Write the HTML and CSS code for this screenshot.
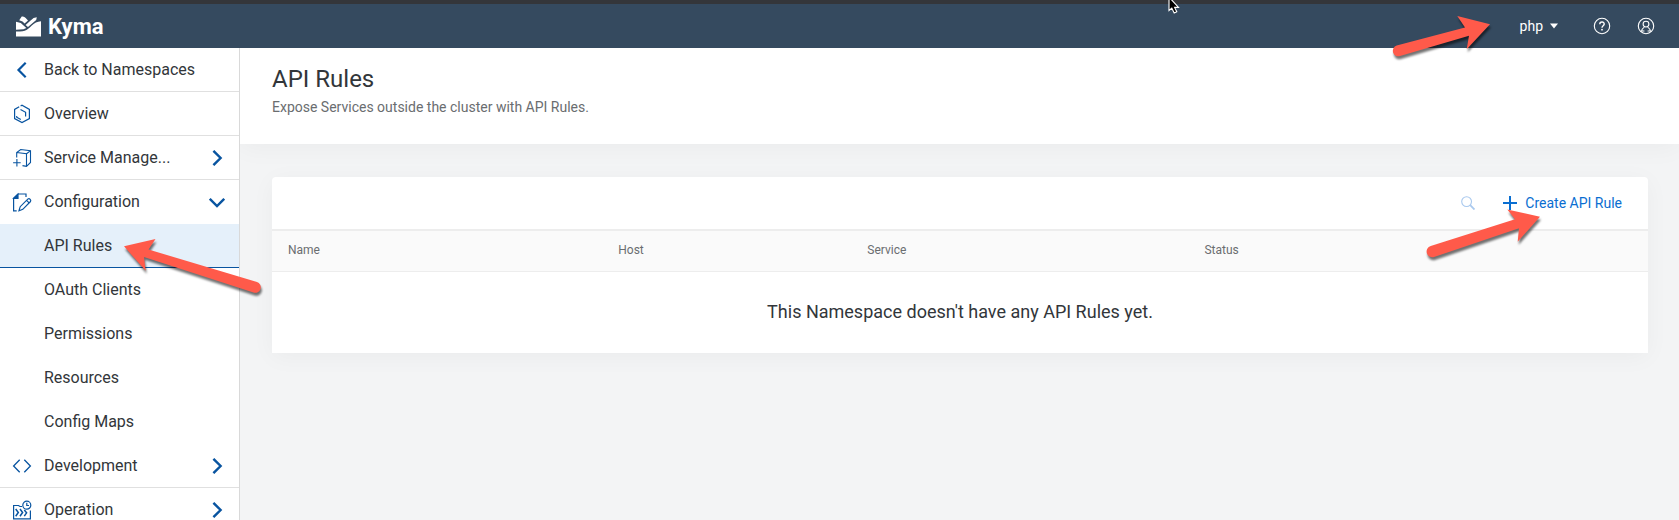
FILE: index.html
```
<!DOCTYPE html>
<html lang="en">
<head>
<meta charset="utf-8">
<title>Kyma</title>
<link rel="stylesheet" href="styles.css">
</head>
<body>
<div class="app">
  <header class="shellbar">
    <a class="brand" href="#">
      <svg class="brand-mark" viewBox="0 0 25 21" aria-hidden="true">
        <path fill="#fff" d="M0 5.8L4.8 7L10.3 11.9L7.5 13.2L0 13.8Z M3.2 4.2L5.7 .6Q8 -.2 9.7 2.1L12 4.4L8.6 7.6L6.5 5.6Z M9.6 8.9L14.6 4.4Q17.5 1.3 20.8 1.3L20.2 3.9L12 11Z M0 15.6C10.5 15.7 12 13 15.5 9.7Q19.5 5.5 25 5.2V20.4H0Z"/>
      </svg>
      <span>Kyma</span>
    </a>
    <div class="shell-actions">
      <button class="namespace" type="button">php
        <svg class="caret" viewBox="0 0 8 6" aria-hidden="true"><path fill="#fff" d="M0 .5H8L4 5.5Z"/></svg>
      </button>
      <button class="icon-button" type="button" aria-label="Help">
        <svg viewBox="0 0 18 18" fill="none" stroke="#fff" aria-hidden="true">
          <circle cx="9" cy="9" r="7.7" stroke-width="1.1"/>
          <path d="M6.8 7.2C6.8 4.3 11.3 4.4 11.2 7.1C11.1 8.7 9 8.8 9 10.7" stroke-width="1.4"/>
          <circle cx="9" cy="12.7" r=".9" fill="#fff" stroke="none"/>
        </svg>
      </button>
      <button class="icon-button" type="button" aria-label="Profile">
        <svg viewBox="0 0 18 18" fill="none" stroke="#fff" stroke-width="1.1" aria-hidden="true">
          <circle cx="9" cy="9" r="7.7"/>
          <circle cx="9" cy="7.1" r="2.9"/>
          <path d="M4.4 14.6C4.6 12.2 5.8 11.1 7.3 10.1M13.6 14.6C13.4 12.2 12.2 11.1 10.7 10.1M5 14H7.4M10.6 14H13"/>
        </svg>
      </button>
    </div>
  </header>

  <nav class="sidebar">
    <a class="nav-item" href="#">
      <svg class="nav-icon" viewBox="0 0 20 20" fill="none" stroke="#0854a0" stroke-width="2.2" aria-hidden="true"><path d="M13.7 2.8L6.5 10L13.7 17.2"/></svg>
      <span class="nav-label">Back to Namespaces</span>
    </a>
    <a class="nav-item" href="#">
      <svg class="nav-icon" viewBox="0 0 20 20" fill="none" stroke="#0854a0" stroke-width="1.2" aria-hidden="true"><path d="M7.2 2.8L2.6 5.4V14.6L10 18.6L17.4 14.6V5.4L10 1.3L8.6 2.1M8.5 5.5L13.6 8.3V12.6M4.7 12V13.2L8.8 15.6"/></svg>
      <span class="nav-label">Overview</span>
    </a>
    <a class="nav-item" href="#">
      <svg class="nav-icon" viewBox="0 0 20 20" fill="none" stroke="#0854a0" stroke-width="1.1" aria-hidden="true"><path d="M4.700 9.500V4.500L8.700 1.500L18.500 2.800V14.500L14.500 18.300L10.500 17.600M4.700 4.500L14.500 5.800V18.300M14.500 5.800L18.300 2.900M4.900 11V18.600M1.100 14.800H8.700"/></svg>
      <span class="nav-label">Service Manage...</span>
      <svg class="chevron" viewBox="0 0 16 16" fill="none" stroke="#0854a0" stroke-width="2.4" aria-hidden="true"><path d="M4.4 .8L11.6 8L4.4 15.2"/></svg>
    </a>
    <a class="nav-item nav-item-open" href="#">
      <svg class="nav-icon" viewBox="0 0 20 20" fill="none" stroke="#0854a0" stroke-width="1.2" aria-hidden="true"><path d="M4.7 18.8H1.6V6.2L6 2H14V5M7 18.7L8.2 14.7L16 6.9Q17.1 6.2 18.2 7.3Q19.2 8.5 18.5 9.5L10.8 17.3ZM14.6 8.4L17.1 10.9"/><path fill="#0854a0" d="M1.600 6.500L6 2.200V6.500Z"/></svg>
      <span class="nav-label">Configuration</span>
      <svg class="chevron" viewBox="0 0 16 16" fill="none" stroke="#0854a0" stroke-width="2.4" aria-hidden="true"><path d="M.8 4.8L8 12L15.2 4.8"/></svg>
    </a>
    <a class="nav-item nav-child nav-selected" href="#" aria-current="page"><span class="nav-label">API Rules</span></a>
    <a class="nav-item nav-child" href="#"><span class="nav-label">OAuth Clients</span></a>
    <a class="nav-item nav-child" href="#"><span class="nav-label">Permissions</span></a>
    <a class="nav-item nav-child" href="#"><span class="nav-label">Resources</span></a>
    <a class="nav-item nav-child" href="#"><span class="nav-label">Config Maps</span></a>
    <a class="nav-item" href="#">
      <svg class="nav-icon" viewBox="0 0 20 20" fill="none" stroke="#0854a0" stroke-width="1.3" aria-hidden="true"><path d="M7.7 3.7L1.6 10L7.7 16.3M12.3 3.7L18.4 10L12.3 16.3"/></svg>
      <span class="nav-label">Development</span>
      <svg class="chevron" viewBox="0 0 16 16" fill="none" stroke="#0854a0" stroke-width="2.4" aria-hidden="true"><path d="M4.4 .8L11.6 8L4.4 15.2"/></svg>
    </a>
    <a class="nav-item" href="#">
      <svg class="nav-icon" viewBox="0 0 20 20" fill="none" stroke="#0854a0" stroke-width="1.2" aria-hidden="true"><path d="M10 6.5H8L6.5 5.5H1.6V18.8H18.4V10.5"/><circle cx="14.8" cy="5.2" r="4"/><path d="M14.8 2.8V5.5H17"/><path stroke-width="1.5" d="M3.7 9L6.3 12.5L3.7 16.2M8 9L10.6 12.5L8 16.2M12.3 10L14.6 12.8L12.3 16.2"/></svg>
      <span class="nav-label">Operation</span>
      <svg class="chevron" viewBox="0 0 16 16" fill="none" stroke="#0854a0" stroke-width="2.4" aria-hidden="true"><path d="M4.4 .8L11.6 8L4.4 15.2"/></svg>
    </a>
  </nav>

  <main class="content">
    <section class="page-head">
      <h1>API Rules</h1>
      <p>Expose Services outside the cluster with API Rules.</p>
    </section>
    <section class="panel">
      <div class="toolbar">
        <button class="search" type="button" aria-label="Search">
          <svg viewBox="0 0 14 14" fill="none" stroke="#a9c9ee" aria-hidden="true"><circle cx="5.6" cy="5.6" r="4.9" stroke-width="1.1"/><path stroke-width="1.8" d="M9.2 9.2L13.5 13.5"/></svg>
        </button>
        <button class="create" type="button">
          <svg viewBox="0 0 14 14" stroke="#0a6ed1" stroke-width="2" aria-hidden="true"><path d="M7 0V14M0 7H14"/></svg>
          Create API Rule
        </button>
      </div>
      <table class="rules">
        <colgroup><col class="col-name"><col class="col-host"><col class="col-service"><col class="col-status"></colgroup>
        <thead><tr><th>Name</th><th>Host</th><th>Service</th><th>Status</th></tr></thead>
        <tbody><tr><td colspan="4">This Namespace doesn't have any API Rules yet.</td></tr></tbody>
      </table>
    </section>
  </main>
</div>

<svg class="pointer" viewBox="0 0 14 20" aria-hidden="true"><path fill="#000" stroke="#fff" stroke-width="1.1" d="M1 -3V10.5L3.8 8.2L6.2 13L8.8 11.8L6.6 7.4H10.5Z"/></svg>
<svg class="arrow arrow-nav" viewBox="0 0 150 70" aria-hidden="true"><path d="M5 17.3L36.5 10L29.5 20.5L138 53A5.4 5.4 0 0 1 134.500 63.500L25 28L26.700 41.800Z"/></svg>
<svg class="arrow arrow-namespace" viewBox="0 0 120 60" aria-hidden="true"><path d="M110 24.300L77.300 16L85 27.500L16.700 45.500A5.400 5.400 0 0 0 20 56L89 35.700L86.700 49.300Z"/></svg>
<svg class="arrow arrow-create" viewBox="0 0 130 70" aria-hidden="true"><path d="M120 16.700L87.300 9.500L95 19.300L10.700 46A5.400 5.400 0 0 0 14 57L99 28.300L97.700 41.700Z"/></svg>
</body>
</html>
```
FILE: styles.css
```
* { box-sizing: border-box; }

body {
  margin: 0;
  position: relative;
  font-family: Roboto, "Liberation Sans", sans-serif;
  color: #32363a;
  background: #f3f4f5;
  overflow: hidden;
}

button {
  font: inherit;
  color: inherit;
  background: none;
  border: 0;
  padding: 0;
}

a { color: inherit; text-decoration: none; }
svg { display: block; flex: none; }

.app {
  display: grid;
  grid-template: auto minmax(0, 1fr) / 240px minmax(0, 1fr);
  height: 100vh;
}

.shellbar {
  grid-column: 1 / -1;
  display: flex;
  align-items: center;
  justify-content: space-between;
  height: 48px;
  padding: 0 24px 0 16px;
  border-top: 4px solid #34363a;
  background: #354a5f;
  color: #fff;
}

.brand {
  display: flex;
  align-items: center;
  gap: 7px;
  font-size: 22px;
  font-weight: 700;
}
.brand-mark { width: 25px; height: 21px; }

.shell-actions { display: flex; align-items: center; }
.namespace {
  display: flex;
  align-items: center;
  gap: 7px;
  font-size: 14px;
  margin-right: 35px;
}
.caret { width: 8px; height: 6px; }
.icon-button svg { width: 18px; height: 18px; }
.icon-button + .icon-button { margin-left: 26px; }

.sidebar {
  background: #fff;
  border-right: 1px solid #d9d9d9;
  overflow: hidden;
}
.nav-item {
  display: flex;
  align-items: center;
  height: 44px;
  padding: 0 14px 0 12px;
  border-bottom: 1px solid #e0e0e0;
  font-size: 16px;
}
.nav-icon { width: 20px; height: 20px; margin-right: 12px; }
.nav-label { flex: 1; white-space: nowrap; }
.chevron { width: 16px; height: 16px; }
.nav-item-open { border-bottom-color: transparent; }
.nav-child { padding-left: 44px; border-bottom-color: transparent; }
.nav-selected { background: #e5f0fa; border-bottom: 1px solid #0854a0; }

.content { overflow: hidden; }
.page-head {
  height: 96px;
  padding: 16px 32px;
  background: #fff;
  box-shadow: 0 4px 24px rgba(0, 0, 0, 0.04);
}
.page-head h1 {
  margin: 0;
  font-size: 24px;
  line-height: 30px;
  font-weight: 400;
}
.page-head p {
  margin: 3px 0 0;
  font-size: 14px;
  line-height: 20px;
  color: #6a6d70;
}

.panel {
  margin: 33px 31px 0 32px;
  border-radius: 4px 4px 0 0;
  background: #fff;
  box-shadow: 0 4px 24px rgba(0, 0, 0, 0.04);
}
.toolbar {
  display: flex;
  align-items: center;
  justify-content: flex-end;
  gap: 28px;
  height: 52px;
  padding-right: 26px;
}
.search svg, .create svg { width: 14px; height: 14px; }
.create {
  display: flex;
  align-items: center;
  gap: 8px;
  font-size: 14px;
  color: #0a6ed1;
}

.rules {
  width: 100%;
  table-layout: fixed;
  border-collapse: separate;
  border-spacing: 0;
}
.col-name { width: 24%; }
.col-host { width: 18.1%; }
.col-service { width: 24.5%; }
.rules th {
  height: 43px;
  padding: 0 16px 2px;
  border-top: 2px solid #ededed;
  border-bottom: 1px solid #ededed;
  background: #fafafa;
  font-size: 12px;
  font-weight: 400;
  text-align: left;
  color: #6a6d70;
}
.rules td {
  height: 81px;
  padding: 0 0 2px;
  font-size: 18px;
  text-align: center;
}

.pointer {
  position: absolute;
  top: 0;
  left: 1168px;
  width: 14px;
  height: 20px;
}
.arrow {
  position: absolute;
  fill: #ff5a4a;
  pointer-events: none;
  filter: drop-shadow(1px 3px 1px rgba(0, 0, 0, 0.55));
}
.arrow-nav { left: 119px; top: 229px; width: 150px; height: 70px; }
.arrow-namespace { right: 179px; top: 0; width: 120px; height: 60px; }
.arrow-create { right: 129px; top: 200px; width: 130px; height: 70px; }
```
